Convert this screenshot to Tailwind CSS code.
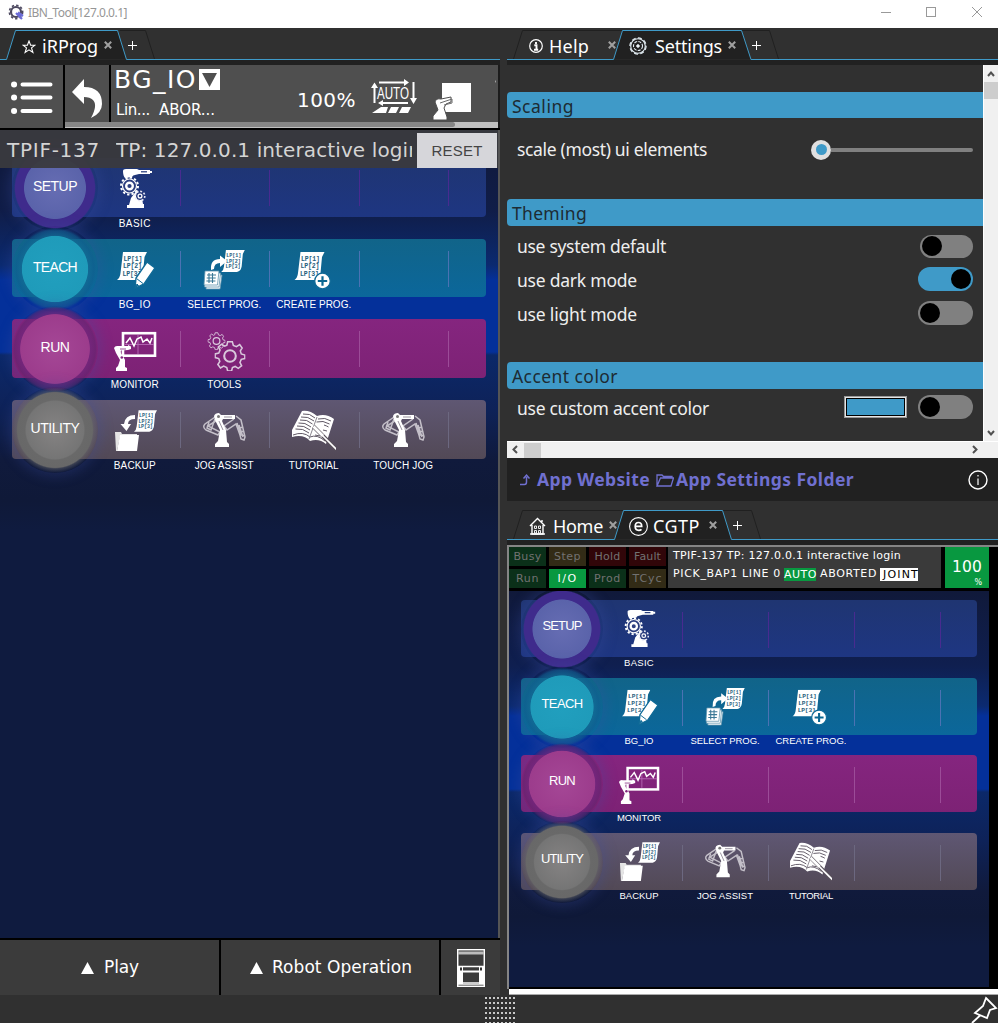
<!DOCTYPE html>
<html lang="en">
<head>
<meta charset="utf-8">
<title>IBN_Tool[127.0.0.1]</title>
<script src="https://cdn.jsdelivr.net/npm/@tailwindcss/browser@4"></script>
</head>
<body class="w-[998px] h-[1023px] overflow-hidden bg-[#303030] font-['Noto_Sans',sans-serif] text-white flex flex-col">

<!-- shared icon symbols, 44x42 grid -->
<svg class="hidden">
  <defs>
    <symbol id="page" viewBox="0 0 30 28">
      <path d="M6 0H30L27.500 5L26 21Q25 27 20 28H0Q3 26 3.500 21Z" fill="#fff"/>
      <g fill="#27607c" font-family="Liberation Mono" font-weight="bold" font-size="6.500">
        <text x="6.500" y="8.500" textLength="19">LP[1]</text><text x="6" y="16" textLength="19">LP[2]</text><text x="5.500" y="23.500" textLength="19">LP[3]</text>
      </g>
    </symbol>
    <symbol id="gear" viewBox="-12 -12 24 24">
      <path d="M-1.800 -11H1.800L2.600 -8.200L5 -7.200L7.500 -8.800L9.400 -6.200L8 -3.900L8.700 -1.600L11.500 -.8V2L8.700 2.600L7.700 5L9 7.600L6.400 9.600L4 8.100L1.900 8.900L1.200 11.600H-1.800L-2.500 8.900L-4.900 7.800L-7.400 9.200L-9.400 6.600L-7.900 4.200L-8.700 2L-11.500 1.200V-1.600L-8.700 -2.300L-7.700 -4.600L-9 -7.100L-6.500 -9.200L-4.100 -7.600L-2.400 -8.300Z" fill="none" stroke="currentColor" stroke-width="1.200"/>
      <circle r="4.500" fill="none" stroke="currentColor" stroke-width="1.600"/>
    </symbol>
    <symbol id="basic" viewBox="0 0 44 42">
      <path d="M10 3Q10 1 13 1H24L26 2H37V3H39V5H37V6H26L22 7Q20 7 19 9L12 10Q10 8 10 3Z" fill="#fff"/>
      <path d="M28 3.800H34" stroke="#1f3576" stroke-width="1.200"/>
      <path d="M18 30L24 22L29 30L30 36H31V40H14V37H16Z" fill="#fff"/>
      <circle cx="16.500" cy="18" r="7" fill="#2c3e7f"/><circle cx="27" cy="28" r="4" fill="#2c3e7f"/>
      <circle cx="16.500" cy="18" r="7" fill="none" stroke="#fff" stroke-width="1.200"/>
      <circle cx="16.500" cy="18" r="8.500" fill="none" stroke="#fff" stroke-width="2" stroke-dasharray="2.300 2.150"/>
      <circle cx="16.500" cy="18" r="3.300" fill="none" stroke="#fff" stroke-width="2.400"/>
      <circle cx="27" cy="28" r="4.800" fill="none" stroke="#e8e8f4" stroke-width="1.600" stroke-dasharray="2 1.700"/>
      <circle cx="27" cy="28" r="1.900" fill="none" stroke="#fff" stroke-width="1.300"/>
    </symbol>
    <symbol id="edit" viewBox="0 0 44 42">
      <use href="#page" x="4" y="3" width="30" height="28"/>
      <path d="M34 13L42 19L31 35L22 39.500L23 29Z" fill="#fff" stroke="#0f6a97" stroke-width="1.400"/>
      <path d="M23.500 29.500L30 34.500M22.500 38L24 35L25.500 36.500Z" stroke="#0f6a97" stroke-width="1" fill="#0f6a97"/>
      <path d="M-1.500 39h1.200" stroke="#fff"/>
    </symbol>
    <symbol id="select" viewBox="0 0 44 42">
      <use href="#page" x="19" y="1" width="24" height="22"/>
      <path d="M9 21Q8 10 18 10V6.500L25 12L18 18V14Q12 14 12 20Z" fill="#fff"/>
      <g fill="#fff" stroke="#5f93ad" stroke-width=".8"><path d="M5 26H20L18 40H4Z"/><path d="M3.500 24H18.500L17 38H2.500Z"/><path d="M3 22H17L15.500 36H2Z"/></g>
      <path d="M5 26h9M4.700 29h9M4.400 32h9M7 24v10M10.500 24v10" stroke="#3b7896" stroke-width="1.100"/>
    </symbol>
    <symbol id="create" viewBox="0 0 44 42">
      <use href="#page" x="2" y="3" width="31" height="28"/>
      <circle cx="30.500" cy="32" r="7.800" fill="#fff" stroke="#0f6a97" stroke-width="1.300"/>
      <path d="M30.500 27.300V36.700M25.800 32H35.200" stroke="#0b6792" stroke-width="2.200"/>
    </symbol>
    <symbol id="monitor" viewBox="0 0 44 42">
      <rect x="10" y="4.200" width="32" height="22.500" fill="none" stroke="#fff" stroke-width="2.600"/>
      <path d="M12 15.500H41M25 6V25" stroke="#b76bb5" stroke-width=".9"/>
      <path d="M13 14L17 9L21 17L24 10L28 8L30 13L34 10L37 14L39 9" fill="none" stroke="#fff" stroke-width="1.500"/>
      <path d="M1 19Q2 16.500 5 17L15 17V16L18 17.500V20L15 21L8 21.500Q7 24 10 27L12 31L12 38L14 39V42H3V39L5 37L7 31L3 24Z" fill="#fff"/>
      <circle cx="8.800" cy="28.500" r="1.300" fill="#81247c"/>
      <path d="M7 20h6" stroke="#81247c" stroke-width=".8"/>
    </symbol>
    <symbol id="tools" viewBox="0 0 44 42">
      <g class="text-[#d9c8dc]"><use href="#gear" x="5.500" y="3" width="18" height="18"/><use href="#gear" x="12.500" y="11.500" width="31" height="31"/></g>
    </symbol>
    <symbol id="backup" viewBox="0 0 44 42">
      <use href="#page" x="21" y="0" width="23" height="22"/>
      <path d="M22 5Q12 5 11 14H7.500L13.500 21L18 14H15Q15 9 22 9Z" fill="#fff"/>
      <path d="M2 22H8L9 24H24V27H7L4 41H3Z" fill="#e4e4e4"/>
      <path d="M7 25H26L24 41H4Z" fill="#fff"/>
    </symbol>
    <symbol id="jog" viewBox="0 0 44 42">
      <g fill="none" stroke="#c4c0c9" stroke-width="1.500">
        <path d="M16 5L3 14Q0 17 4 20L16 25L18 22L6 16L17 9Z"/><path d="M7 12L5 18L9 20L13 9"/>
        <path d="M34 6L39 10L43 27L42 30L39 29L38 25L34 14L25 20L22 16L32 9"/><path d="M35 13l4 13M37 15l4 12M38 18l3-1M39 22l3-1M40 26l3-1"/>
      </g>
      <path d="M12 6Q13 3 17 3L19 5H33V9H21L20 11L24 20L25 32L27 34V37H13V34L16 31L18 20L13 10Z" fill="#fff"/>
      <path d="M22 7h8M17 11l4 9" stroke="#9a949f" stroke-width="1"/><circle cx="16.500" cy="6.500" r="1.500" fill="#777"/>
    </symbol>
    <symbol id="book" viewBox="0 0 44 42">
      <path d="M10 1Q18 0 25 6Q34 3 42 9L34 34Q27 28 18 31Q12 24 0 27V20Z" fill="#fff"/>
      <path d="M11 4Q18 3 23 8M9 7Q16 6 22 11M8 10Q15 9 20.500 14M6.500 13Q13 12 19 17M5 16Q12 15 18 20M3.500 19Q11 18 17 23M26 9Q33 7 39 11M24.500 12Q31 10 37.500 14M32 15Q35 16 36.500 17M31 20L35 21M23 25L28 26M1 25Q11 21 18 27Q25 24 33 31" stroke="#615966" stroke-width="1" fill="none"/>
      <path d="M25 7L17 29" stroke="#8b8790"/>
      <path d="M21.500 16.500L44.500 39.500" stroke="#5a525c" stroke-width="4"/><path d="M21.500 16.500L31 26" stroke="#fff" stroke-width="3"/><path d="M30 25L44.500 39.500" stroke="#fff" stroke-width="1.700"/>
    </symbol>
    <symbol id="x" viewBox="0 0 8 8"><path d="M.8 .8L7.200 7.200M7.200 .8L.8 7.200" stroke="#a0a0a0" stroke-width="2"/></symbol>
  </defs>
</svg>

<!-- title bar -->
<header class="h-7 shrink-0 bg-white flex items-center pl-2">
  <svg class="w-4 h-4 shrink-0 mr-1 -mt-1 overflow-visible text-[#4d4960]" viewBox="0 0 16 16"><circle cx="8" cy="8" r="5" fill="none" stroke="currentColor" stroke-width="2.200"/><circle cx="8" cy="8" r="6.700" fill="none" stroke="currentColor" stroke-width="1.500" stroke-dasharray="2.400 2.100"/><path d="M8 9L14 15M10 8.500L15 12" stroke="#6c6cd8" stroke-width="2.200"/></svg>
  <span data-w="98" class="text-xs text-[#969696] -mt-0.5">IBN_Tool[127.0.0.1]</span>
  <svg class="ml-auto w-[118px] h-6 -mt-1" viewBox="0 0 118 24" fill="none" stroke="#999"><path d="M1 12.500H11"/><rect x="46.500" y="7.500" width="9" height="9"/><path d="M92 7L102 17M102 7L92 17"/></svg>
</header>

<main class="flex h-[967px] shrink-0">
  <!-- left pane -->
  <section class="w-[500px] flex flex-col">
    <div class="h-8 relative">
      <svg class="absolute inset-0 w-[500px] h-8" viewBox="0 0 500 32" fill="none"><path d="M119.500 2.500H145.500L154.500 31" stroke="#202020"/><path d="M6.500 31.500L15.500 2.500H117.500L126.500 31.500Z" fill="#212121"/><path d="M0 31.500H6.500L15.500 2.500H117.500L126.500 31.500H500" stroke="#3f9ac8"/></svg>
      <div class="relative flex items-center h-8 pl-[22px] pt-1">
        <svg class="w-[14px] h-[14px] shrink-0 mr-[6px] mt-0.5" viewBox="0 0 14 14"><path d="M7 1L8.600 5.200H13L9.500 7.900L10.900 12.500L7 9.800L3.100 12.500L4.500 7.900L1 5.200H5.400Z" fill="none" stroke="#fff" stroke-width="1.100"/></svg>
        <span data-w="55" class="text-[18px] leading-6">iRProg</span>
        <svg class="w-2 h-2 ml-[6px] -mt-0.5"><use href="#x"/></svg>
        <svg class="w-[9px] h-[9px] ml-4 -mt-0.5" viewBox="0 0 9 9"><path d="M0 4.500H9M4.500 0V9" stroke="#fff"/></svg>
      </div>
    </div>
    <div class="h-[5px] bg-[#212121]"></div>
    <!-- program header -->
    <div class="h-[65px] flex bg-[#4f4f4f] border-b-2 border-black">
      <div class="w-[65px] border-r-2 border-black">
        <svg class="w-[63px] h-[63px]" viewBox="0 0 63 63" stroke="#fff" stroke-linecap="round"><path d="M22.500 19.500H50.500M22.500 32.500H50.500M22.500 46H50.500" stroke-width="4"/><path d="M14 19.500h.1M14 32.500h.1M14 46h.1" stroke-width="6"/></svg>
      </div>
      <div class="w-[435px] flex flex-col border-r-2 border-[#1c1c1c]">
        <div class="h-[57px] flex">
          <div class="w-[46px] shrink-0 border-r-2 border-black"><svg class="w-11 h-[57px]" viewBox="0 0 44 57"><path d="M7 27L19 14V22Q37 22 37 39Q37 48 26 53Q33 40 28 35Q25 32 19 32V39Z" fill="#fff"/></svg></div>
          <div class="w-[183px] shrink-0 pl-[3px] font-['DejaVu_Sans',sans-serif]">
            <div class="flex items-center h-[30px]"><span data-w="82" class="text-[25px]">BG_IO</span><svg class="w-[21px] h-[21px] shrink-0 ml-0.5 -mt-0.5" viewBox="0 0 21 21"><path d="M0 0H21V21H0Z" fill="#fff"/><path d="M3 4H18L10.500 18Z" fill="#4f4f4f"/></svg></div>
            <div class="flex text-[15px] leading-[30px] pl-0.5"><span data-w="33">Lin...</span><span data-w="55" class="ml-[9px]">ABOR...</span></div>
          </div>
          <div class="font-['DejaVu_Sans',sans-serif] text-xl pt-[21px] pl-[3px] w-[74px] shrink-0"><span data-w="58">100%</span></div>
          <svg class="w-[128px] h-[57px] shrink-0" viewBox="368 65 128 57">
            <g stroke="#fff" stroke-width="2" fill="none"><path d="M379 82.500H405M374.500 103V87M413.500 82V99M408 103H382"/></g>
            <path d="M404 79L409 82.500L404 86ZM371 88L374.500 82.500L378 88ZM410 98L413.500 104L417 98ZM383 100L378 103L383 106ZM372 113L381 107H388L386 113ZM388 113L391 107H399L396 113ZM399 113L402 107H411L408 113Z" fill="#fff"/>
            <text x="377" y="99" textLength="32" lengthAdjust="spacingAndGlyphs" font-family="Liberation Sans" font-size="16" fill="#fff">AUTO</text>
            <path d="M442 83H471V112H442Z" fill="#fff"/><path d="M435 102Q436 98 441 99L451 97V102L446 104L444 108L447 117V120H433V116L438 110Z" fill="#fff" stroke="#4f4f4f"/><path d="M440 103L452 99V103L444 105" fill="none" stroke="#6b6b6b"/>
            <circle cx="497" cy="81.500" r="1.500" fill="#fff"/>
          </svg>
        </div>
        <div class="h-[6px] bg-[#c0c0c0]"><div class="h-[5px] w-[390px] rounded-r bg-[#868686]"></div></div>
      </div>
    </div>
    <!-- menu, with message strip lying on it -->
    <div class="relative h-[808px] overflow-hidden border-r-2 border-[#555] bg-[linear-gradient(180deg,#10193a_0px,#101d48_80px,#0b2a70_135px,#04309a_150px,#04309a_222px,#0b2869_225px,#0e2258_280px,#101a3c_330px,#0f1938_370px,#0f1b3f_400px)]">
      <div id="menuL" class="pt-[28px] pl-3"></div>
      <div class="absolute inset-x-0 top-0 h-[38px] bg-[#3a3a3e]/95 flex font-['DejaVu_Sans',sans-serif] text-xl text-[#d4d4d4] leading-[41px]">
        <span data-w="92" class="ml-[7px]">TPIF-137</span>
        <div class="ml-[16px] w-[296px] shrink-0 overflow-hidden whitespace-nowrap"><span data-w="304">TP: 127.0.0.1 interactive login</span></div>
        <button class="ml-[5px] mt-[3px] w-20 h-[35px] shrink-0 bg-[#d6d6da] text-[#444] font-['Liberation_Sans',sans-serif] text-[15px] leading-[35px]"><span data-w="50">RESET</span></button>
      </div>
    </div>
    <!-- bottom buttons -->
    <div class="h-[57px] flex bg-[#3b3b3b] border-t-2 border-black font-['DejaVu_Sans',sans-serif] text-[17px]">
      <div class="w-[221px] border-r-2 border-black flex items-center pl-[81px] gap-[10px]"><svg class="w-[13px] h-3 shrink-0" viewBox="0 0 13 12"><path d="M6.500 0L13 12H0Z" fill="#fff"/></svg><span data-w="34">Play</span></div>
      <div class="w-[220px] border-r-2 border-black flex items-center pl-[29px] gap-[9px]"><svg class="w-[13px] h-3 shrink-0" viewBox="0 0 13 12"><path d="M6.500 0L13 12H0Z" fill="#fff"/></svg><span data-w="139">Robot Operation</span></div>
      <div class="flex items-center pl-4"><svg class="w-7 h-[38px]" viewBox="0 0 28 38" fill="none" stroke="#fff"><rect x=".7" y=".7" width="26.600" height="36.600" stroke-width="1.500"/><path d="M1 4H27" stroke="#bbb" stroke-width="3"/><path d="M1 17.500H27M1 35H27" stroke-width="1.500"/><path d="M3.500 18V35M24.500 18V35" stroke-width="5"/><path d="M6 22.500H22" stroke-width="2"/><path d="M3 20h2M23 20h2" stroke="#333" stroke-width="3"/><path d="M6 33.500H22" stroke="#ccc"/></svg></div>
    </div>
  </section>

  <div class="w-[7px] bg-[#303030]"></div>

  <!-- right pane -->
  <section class="w-[491px] flex flex-col">
    <div class="h-8 relative">
      <svg class="absolute inset-0 w-[491px] h-8" viewBox="507 28 491 32" fill="none"><path d="M513.500 59L522.500 30.500H622M742 30.500H769.500L778.500 59" stroke="#202020"/><path d="M613.500 59.500L622.500 30.500H741.500L751 59.500Z" fill="#212121"/><path d="M507 59.500H613.500L622.500 30.500H741.500L751 59.500H998" stroke="#3f9ac8"/></svg>
      <div class="relative flex items-center h-8 pl-[22px] pt-1">
        <svg class="w-[14px] h-[14px] mr-[6px]" viewBox="0 0 14 14"><circle cx="7" cy="7" r="6.300" fill="none" stroke="#fff" stroke-width="1.200"/><path d="M7 3V5M5.300 6.300H7.500V10.600M5 10.800H9.200" stroke="#fff" stroke-width="1.900" fill="none"/></svg>
        <span data-w="39" class="text-[18px] leading-6">Help</span>
        <svg class="w-2 h-2 ml-[19px] -mt-0.5"><use href="#x"/></svg>
        <svg class="w-[18px] h-[18px] ml-[13px] mr-2" viewBox="-9 -9 18 18" fill="none" stroke="#e4eef4"><circle r="7.300" stroke-width="1.100"/><circle r="8.100" stroke-width="1.200" stroke-dasharray="4 2.300"/><circle r="4.500" stroke-width="1.100" stroke-dasharray="3 1.200"/><circle r="1.300" fill="#fff"/></svg>
        <span data-w="66" class="text-[18px] leading-6">Settings</span>
        <svg class="w-2 h-2 ml-[6px] -mt-0.5"><use href="#x"/></svg>
        <svg class="w-[9px] h-[9px] ml-4 -mt-0.5" viewBox="0 0 9 9"><path d="M0 4.500H9M4.500 0V9" stroke="#fff"/></svg>
      </div>
    </div>
    <div class="h-[5px] bg-[#212121]"></div>

    <div class="flex h-[376px]">
      <div class="w-[476px] text-[17.500px] text-[#eee]">
        <h2 class="mt-[27px] h-[26px] rounded-l bg-[#3f9ac8] text-[#1d2b33] pl-[5px] leading-7"><span data-w="61">Scaling</span></h2>
        <div class="h-[81px] flex items-center pl-[10px] pr-[10px] justify-between pb-[18px]">
          <span data-w="189">scale (most) ui elements</span>
          <div class="flex items-center"><div class="w-5 h-5 rounded-full bg-[#e0e0e0] flex items-center justify-center"><div class="w-[11px] h-[11px] rounded-full bg-[#3f9ac8]"></div></div><div class="w-[142px] h-1 bg-[#808080] rounded-r"></div></div>
        </div>
        <h2 class="h-[27px] rounded-l bg-[#3f9ac8] text-[#1d2b33] pl-[5px] leading-7"><span data-w="74">Theming</span></h2>
        <div class="h-[136px] pt-[3px] pl-[10px] pr-[10px]">
          <div class="h-[34px] flex items-center justify-between"><span data-w="148">use system default</span><div class="w-[53px] h-[23px] rounded-full bg-[#808080] p-[1.500px]"><div class="w-5 h-5 rounded-full bg-black"></div></div></div>
          <div class="h-[34px] flex items-center justify-between"><span data-w="119">use dark mode</span><div class="w-[55px] h-6 -mt-0.5 rounded-full bg-[#3f9ac8] p-0.5 flex justify-end"><div class="w-5 h-5 rounded-full bg-black"></div></div></div>
          <div class="h-[34px] flex items-center justify-between"><span data-w="119">use light mode</span><div class="w-[55px] h-6 -mt-0.5 rounded-full bg-[#808080] p-0.5"><div class="w-5 h-5 rounded-full bg-black"></div></div></div>
        </div>
        <h2 class="h-[27px] rounded-l bg-[#3f9ac8] text-[#1d2b33] pl-[5px] leading-7"><span data-w="105">Accent color</span></h2>
        <div class="h-[38px] flex items-center pl-[10px] pr-[10px]"><span data-w="191">use custom accent color</span><div class="ml-auto -mt-0.5 w-[63px] h-[22px] border border-[#999] bg-[#e6e6e6] p-px"><div class="h-[18px] border border-black bg-[#3f9ac8]"></div></div><div class="ml-[11px] w-[55px] h-6 -mt-0.5 rounded-full bg-[#808080] p-0.5"><div class="w-5 h-5 rounded-full bg-black"></div></div></div>
      </div>
      <div class="w-[15px] bg-[#f0f0f0] border-l border-white flex flex-col items-center">
        <svg class="w-2 h-[17px] shrink-0" viewBox="0 0 8 17"><path d="M1 11L4 7.500L7 11" fill="none" stroke="#505050" stroke-width="2"/></svg>
        <div class="w-[14px] h-[17px] bg-[#cdcdcd]"></div>
        <svg class="w-2 h-[17px] mt-auto" viewBox="0 0 8 17"><path d="M1 7L4 10.500L7 7" fill="none" stroke="#505050" stroke-width="2"/></svg>
      </div>
    </div>
    <div class="h-[17px] bg-[#f0f0f0] border-t border-white flex items-center">
      <svg class="w-[17px] h-4" viewBox="0 0 17 16"><path d="M10 4L6.500 7.500L10 11" fill="none" stroke="#505050" stroke-width="2"/></svg>
      <div class="w-[17px] h-[15px] bg-[#cdcdcd]"></div>
      <svg class="w-[17px] h-4 ml-auto mr-[14px]" viewBox="0 0 17 16"><path d="M6 4L9.500 7.500L6 11" fill="none" stroke="#505050" stroke-width="2"/></svg>
    </div>
    <div class="h-[43px] bg-[#212121] flex items-center pl-3 pr-2.5 text-[#7070d0] font-bold text-[17.500px]">
      <svg class="w-3 h-3 mr-[6px]" viewBox="0 0 12 12"><path d="M1 10.500H5.500Q7.500 10.500 7.500 8V3M4.500 4.500L7.500 1.200L10.500 4.500" fill="none" stroke="currentColor" stroke-width="1.500"/></svg>
      <span data-w="112">App Website</span>
      <svg class="w-[18px] h-[14px] ml-[6px] mr-[2px]" viewBox="0 0 18 14"><path d="M1 13V2H6L7.500 3.500H16V5M1 13L4.500 5H17.500L15 13Z" fill="none" stroke="currentColor" stroke-width="1.300"/></svg>
      <span data-w="177">App Settings Folder</span>
      <svg class="w-5 h-5 ml-auto" viewBox="0 0 20 20"><circle cx="10" cy="10" r="9" fill="none" stroke="#fff" stroke-width="1.400"/><path d="M10 5V6.500M10 8.500V15" stroke="#fff" stroke-width="1.200"/></svg>
    </div>

    <div class="h-[39px] relative">
      <svg class="absolute inset-0 w-[491px] h-[39px]" viewBox="507 501 491 39" fill="none"><path d="M513.500 539L522.500 510.500H623M723 510.500H751.500L760.500 539" stroke="#202020"/><path d="M614.500 539.500L623.500 510.500H722.500L731.500 539.500Z" fill="#212121"/><path d="M507 539.500H614.500L623.500 510.500H722.500L731.500 539.500H998" stroke="#3f9ac8"/></svg>
      <div class="relative flex items-center h-[39px] pl-[22px] pt-[11px]">
        <svg class="w-[17px] h-[18px] mr-[7px]" viewBox="0 0 17 18" fill="none" stroke="#fff" stroke-width="1.400"><path d="M1 9L8.500 1.500L16 9M3 8V17H14V8M13 5V3"/><path d="M1 17H16"/><path d="M5.500 9H7.500V11.500H5.500ZM9.500 9H11.500V11.500H9.500ZM5.500 13.500H7.500V16H5.500ZM9.500 13.500H11.500V16H9.500Z" stroke-width=".9"/></svg>
        <span data-w="49" class="text-[18px] leading-6">Home</span>
        <svg class="w-2 h-2 ml-[6px] -mt-0.5"><use href="#x"/></svg>
        <svg class="w-[19px] h-[19px] ml-3 mr-[5px]" viewBox="0 0 19 19" fill="none" stroke="#fff"><circle cx="9.500" cy="9.500" r="8.900" stroke-width="1.100"/><path d="M6.300 9.300H12.700Q12.700 5.500 9.500 5.500Q6.200 5.500 6.200 9.600Q6.200 13.300 9.700 13.300Q11.500 13.300 12.500 12.300" stroke-width="1.700"/></svg>
        <span data-w="46" class="text-[18px] leading-6">CGTP</span>
        <svg class="w-2 h-2 ml-[9px] -mt-0.5"><use href="#x"/></svg>
        <svg class="w-[9px] h-[9px] ml-4 -mt-0.5" viewBox="0 0 9 9"><path d="M0 4.500H9M4.500 0V9" stroke="#fff"/></svg>
      </div>
    </div>
    <div class="h-[5px] bg-[#212121]"></div>
    <div class="h-[444px] bg-black border-l-2 border-t-2 border-[#858585] font-['DejaVu_Sans',sans-serif]">
      <div class="flex h-[42px]">
        <div class="grid grid-cols-4 grid-rows-2 gap-[3px] w-[157px] h-[41px] text-[11px] leading-5 text-center text-[#727272]">
          <div class="bg-[#0b3019]"><span data-w="27">Busy</span></div><div class="bg-[#322b16]"><span data-w="26">Step</span></div><div class="bg-[#310609]"><span data-w="25">Hold</span></div><div class="bg-[#310609]"><span data-w="26">Fault</span></div>
          <div class="bg-[#0b3019]"><span data-w="22">Run</span></div><div class="bg-[#089840] text-white"><span data-w="19">I/O</span></div><div class="bg-[#0b3019]"><span data-w="26">Prod</span></div><div class="bg-[#322b16]"><span data-w="29">TCyc</span></div>
        </div>
        <div class="ml-[2px] w-[273px] h-[41px] bg-[#3a3a3a] pl-[5px] text-[11px] leading-[18px]">
          <div><span data-w="227">TPIF-137 TP: 127.0.0.1 interactive login</span></div>
          <div class="flex items-center h-[18px]"><span data-w="107">PICK_BAP1 LINE 0</span><span class="ml-[3px] h-[13px] leading-[13px] w-8 bg-[#089840]"><span data-w="32">AUTO</span></span><span data-w="56" class="ml-1">ABORTED</span><span class="ml-[3px] w-[38px] h-[13px] leading-[13px] bg-white text-black pl-[3px]"><span data-w="35">JOINT</span></span></div>
        </div>
        <div class="ml-1 w-11 h-[41px] bg-[#089840] relative text-center text-[15.500px] leading-[41px]"><span data-w="29">100</span><span class="absolute right-[7px] bottom-0 text-[8px] leading-[10px]">%</span></div>
      </div>
      <div class="mt-[2px] h-[396px] w-[480px] overflow-hidden bg-[linear-gradient(180deg,#10193a_0px,#0f1f50_75px,#0b2a70_115px,#04309a_125px,#04309a_198px,#0b2869_201px,#0e2258_250px,#101a3c_300px,#0f1938_325px,#0f1b3f_355px)]">
        <div id="menuR" class="pt-[9px] pl-3"></div>
      </div>
    </div>
    <div class="h-[6px] ml-[2px] bg-white border-b border-[#aaa]"></div>
  </section>
</main>

<!-- footer with grip and pin -->
<footer class="flex-1 bg-[#303030] flex items-center">
  <div class="ml-[485px] w-8 h-[27px] bg-[radial-gradient(circle_at_1px_2px,#c8c8c8_1px,transparent_1.300px)] bg-[length:4px_5px]"></div>
  <svg class="ml-auto w-[27px] h-7" viewBox="0 0 27 28"><path d="M15 3L25 13L19 15L16 23L4 18L12 11ZM9 20.500L1 28" fill="none" stroke="#fff" stroke-width="1.800"/></svg>
</footer>

<script>
const rows = [
  { name: 'SETUP', bar: 'bg-[linear-gradient(#1f3572,#1e3682)]', ring: 'bg-[radial-gradient(closest-side,#666db3_0%,#5a63aa_71%,#3f2b8c_73%,#3f2b8c_92%,#3f2b8c00_95%)]', sep: 'bg-[#482b90]' },
  { name: 'TEACH', bar: 'bg-[linear-gradient(#116489,#0b679b)]', ring: 'bg-[radial-gradient(closest-side,#219fbe_0%,#1f9bba_76%,#126a94cc_78%,#0f5f8f99_90%,#0f5f8f00_96%)]', sep: 'bg-[#4b72b3]' },
  { name: 'RUN', bar: 'bg-[linear-gradient(#85257f,#7d2275)]', ring: 'bg-[radial-gradient(closest-side,#a54796_0%,#9c3c8c_80%,#70267bcc_82%,#61246f99_94%,#61246f00_100%)]', sep: 'bg-[#9c4c98]' },
  { name: 'UTILITY', bar: 'bg-[linear-gradient(#5f5773,#524956)]', ring: 'bg-[radial-gradient(closest-side,#858383_0%,#757575_67%,#696969_70%,#686868_87%,#68686877_90%,#68686800_100%)]', sep: 'bg-[#6c6880]' }
];
const items = {
  menuL: [
    [['basic','BASIC',31]],
    [['edit','BG_IO',31],['select','SELECT PROG.',73],['create','CREATE PROG.',74]],
    [['monitor','MONITOR',47],['tools','TOOLS',33]],
    [['backup','BACKUP',41],['jog','JOG ASSIST',58],['book','TUTORIAL',49],['jog','TOUCH JOG',59]]
  ],
  menuR: [
    [['basic','BASIC',29]],
    [['edit','BG_IO',28],['select','SELECT PROG.',68],['create','CREATE PROG.',70]],
    [['monitor','MONITOR',43]],
    [['backup','BACKUP',38],['jog','JOG ASSIST',55],['book','TUTORIAL',43]]
  ]
};
const look = {
  menuL: { row: 'h-[80.7px] w-[474px] relative', bar: 'h-[58.5px] rounded flex', first: 'w-[78px] shrink-0 relative', ring: 'absolute left-0 -top-[13px] w-[86px] h-[86px] rounded-full shadow-[0_0_12px_4px_#3c4fa044]', name: 'absolute inset-x-0 top-[18px] left-[8px] text-center text-[14px] leading-5', cell: 'w-[89.5px] shrink-0 relative', icon: 'mx-auto mt-[10px] w-11 h-[42px] overflow-visible', cap: 'absolute inset-x-0 top-[60px] text-center text-[10px] leading-3 whitespace-nowrap', sep: 'absolute -right-px top-3 w-px h-[36px]', nw: [43, 43, 28, 48] },
  menuR: { row: 'h-[77.6px] w-[456px] relative', bar: 'h-[57px] rounded flex', first: 'w-[75px] shrink-0 relative', ring: 'absolute left-0 -top-[12px] w-[82px] h-[82px] rounded-full shadow-[0_0_12px_4px_#3c4fa044]', name: 'absolute inset-x-0 top-[16px] left-[7px] text-center text-[13px] leading-5', cell: 'w-[86px] shrink-0 relative', icon: 'mx-auto mt-[9px] w-[42px] h-10 overflow-visible', cap: 'absolute inset-x-0 top-[57px] text-center text-[9.500px] leading-3 whitespace-nowrap', sep: 'absolute -right-px top-3 w-px h-[36px]', nw: [38, 40, 25, 41] }
};
for (const id of ['menuL', 'menuR']) {
  const k = look[id];
  document.getElementById(id).innerHTML = `<div class="font-['Liberation_Sans',sans-serif]">` + rows.map((r, i) => {
    let cells = '';
    for (let c = 0; c < 4; c++) {
      const it = items[id][i][c];
      cells += `<div class="${k.cell}">${it ? `<svg class="${k.icon}"><use href="#${it[0]}"/></svg><div class="${k.cap}"><span data-w="${it[2]}">${it[1]}</span></div>` : ''}<div class="${k.sep} ${r.sep}"></div></div>`;
    }
    return `<div class="${k.row}"><div class="${k.bar} ${r.bar}"><div class="${k.first}"><div class="${k.ring} ${r.ring}"></div><div class="${k.name}"><span data-w="${k.nw[i]}">${r.name}</span></div></div>${cells}</div></div>`;
  }).join('') + '</div>';
}
// track each label so that it fills its nominal width; repeated once styles and fonts have settled
function track() {
  document.querySelectorAll('[data-w]').forEach(s => {
    s.style.whiteSpace = 'nowrap';
    s.style.flexShrink = 0;
    s.style.letterSpacing = '0px';
    const w = s.getBoundingClientRect().width;
    s.style.letterSpacing = ((+s.dataset.w + 1 - w) / s.textContent.length) + 'px';
  });
}
track();
window.addEventListener('load', () => { track(); requestAnimationFrame(track); });
document.fonts.ready.then(track);
</script>
</body>
</html>
